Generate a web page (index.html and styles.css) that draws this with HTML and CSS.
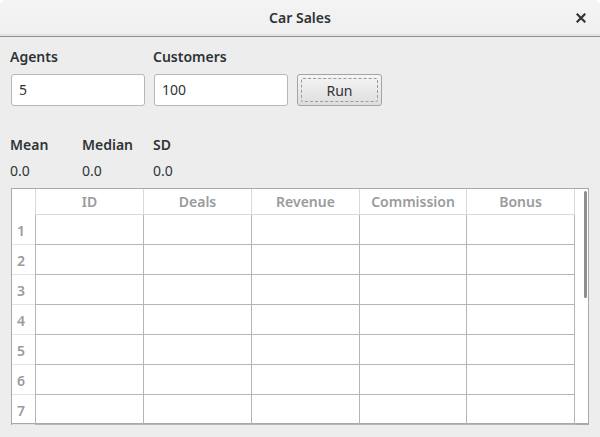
FILE: index.html
```html
<!DOCTYPE html>
<html>
<head>
<meta charset="utf-8">
<link rel="stylesheet" href="styles.css">
</head>
<body>
<div class="window">
  <header class="titlebar">
    <span class="title">Car Sales</span>
    <span class="close"><svg width="10" height="10" viewBox="0 0 10 10"><path d="M1.5 1.5 L8.5 8.5 M8.5 1.5 L1.5 8.5" stroke="#2e3436" stroke-width="2.2" stroke-linecap="square"/></svg></span>
  </header>
  <main class="content">
    <div class="form">
      <div class="field">
        <label class="label">Agents</label>
        <div class="input">5</div>
      </div>
      <div class="field">
        <label class="label">Customers</label>
        <div class="input">100</div>
      </div>
      <button class="btn"><span class="btn-inner">Run</span></button>
    </div>
    <div class="stats">
      <div class="label">Mean</div>
      <div class="label">Median</div>
      <div class="label">SD</div>
      <div class="val">0.0</div>
      <div class="val">0.0</div>
      <div class="val">0.0</div>
    </div>
    <div class="table">
      <div class="grid">
        <div class="corner"></div>
        <div class="th">ID</div>
        <div class="th">Deals</div>
        <div class="th">Revenue</div>
        <div class="th">Commission</div>
        <div class="th last">Bonus</div>

        <div class="rn">1</div><div class="td"></div><div class="td"></div><div class="td"></div><div class="td"></div><div class="td last"></div>
        <div class="rn">2</div><div class="td"></div><div class="td"></div><div class="td"></div><div class="td"></div><div class="td last"></div>
        <div class="rn">3</div><div class="td"></div><div class="td"></div><div class="td"></div><div class="td"></div><div class="td last"></div>
        <div class="rn">4</div><div class="td"></div><div class="td"></div><div class="td"></div><div class="td"></div><div class="td last"></div>
        <div class="rn">5</div><div class="td"></div><div class="td"></div><div class="td"></div><div class="td"></div><div class="td last"></div>
        <div class="rn">6</div><div class="td"></div><div class="td"></div><div class="td"></div><div class="td"></div><div class="td last"></div>
        <div class="rn">7</div><div class="td"></div><div class="td"></div><div class="td"></div><div class="td"></div><div class="td last"></div>
      </div>
      <div class="scroll"><div class="thumb"></div></div>
    </div>
  </main>
</div>
</body>
</html>
```
FILE: styles.css
```css
* { box-sizing: border-box; }
html, body { margin: 0; padding: 0; background: #ffffff; }
body {
  font-family: "Noto Sans", "DejaVu Sans", sans-serif;
  font-size: 14px;
  color: #2e3436;
}
.window {
  width: 600px;
  height: 437px;
  background: #ededed;
  border-radius: 6px 6px 0 0;
  overflow: hidden;
}
.titlebar {
  position: relative;
  height: 37px;
  background: linear-gradient(#f4f4f4, #efefef);
  border-bottom: 1px solid #8f8f8f;
  box-shadow: inset 0 -2px 0 #e2e2e2;
  display: flex;
  align-items: center;
  justify-content: center;
}
.title {
  font-weight: 600;
  font-size: 14px;
  margin-top: -1px;
}
.close {
  position: absolute;
  right: 14px;
  top: 13px;
  width: 10px;
  height: 10px;
  display: block;
  line-height: 0;
}
.content {
  padding: 10px 11px 0 10px;
}
.form {
  display: flex;
  align-items: flex-end;
  gap: 9px;
}
.field {
  display: flex;
  flex-direction: column;
}
.label {
  font-weight: 600;
  line-height: 19px;
}
.field .label { margin-bottom: 8px; }
.field + .field .label { margin-left: -1px; }
.input {
  width: 134px;
  height: 32px;
  margin-left: 1px;
  background: #fff;
  border: 1px solid #b7b7b4;
  border-radius: 3px;
  padding: 0 0 0 7px;
  line-height: 30px;
}
.field + .field .input { margin-left: 0; }
.btn {
  width: 85px;
  height: 32px;
  padding: 3px;
  border: 1px solid #a4a4a4;
  border-radius: 3px;
  background: linear-gradient(#f5f5f5, #dedede);
  font: inherit;
  color: #2e3436;
  margin-left: 0;
}
.btn-inner {
  display: flex;
  align-items: center;
  justify-content: center;
  height: 100%;
  border: 1px dashed #9a9a9a;
  border-radius: 2px;
}
.stats {
  margin-top: 29px;
  display: grid;
  grid-template-columns: 72px 71px auto;
  row-gap: 7px;
}
.val { line-height: 19px; }
.table {
  margin-top: 8px;
  margin-left: 1px;
  width: 578px;
  height: 237px;
  border: 1px solid #a9a9a9;
  border-bottom: 2px solid #a9a9a9;
  display: flex;
  background: #fff;
}
.grid {
  display: grid;
  grid-template-columns: 23px 108px 108px 108px 107px 109px;
  grid-template-rows: 26px repeat(7, 30px);
}
.corner { border-bottom: 1px solid #fff; }
.th {
  border-left: 1px solid #dadada;
  border-bottom: 1px solid #dadada;
  color: #9a9b9b;
  font-weight: 600;
  text-align: center;
  line-height: 25px;
}
.th.last { border-right: 1px solid #dadada; }
.rn {
  border-bottom: 1px solid #e2e2e2;
  color: #9a9b9b;
  font-weight: 600;
  padding-left: 5px;
  padding-top: 5px;
  line-height: 22px;
}
.td {
  border-left: 1px solid #b5b5b5;
  border-bottom: 1px solid #b5b5b5;
}
.td.last { border-right: 1px solid #b5b5b5; }
.scroll {
  flex: 1;
  position: relative;
  background: #fff;
}
.thumb {
  position: absolute;
  top: 2px;
  left: 9px;
  width: 3px;
  height: 107px;
  background: #8b8f8f;
  border-radius: 2px;
}
```
